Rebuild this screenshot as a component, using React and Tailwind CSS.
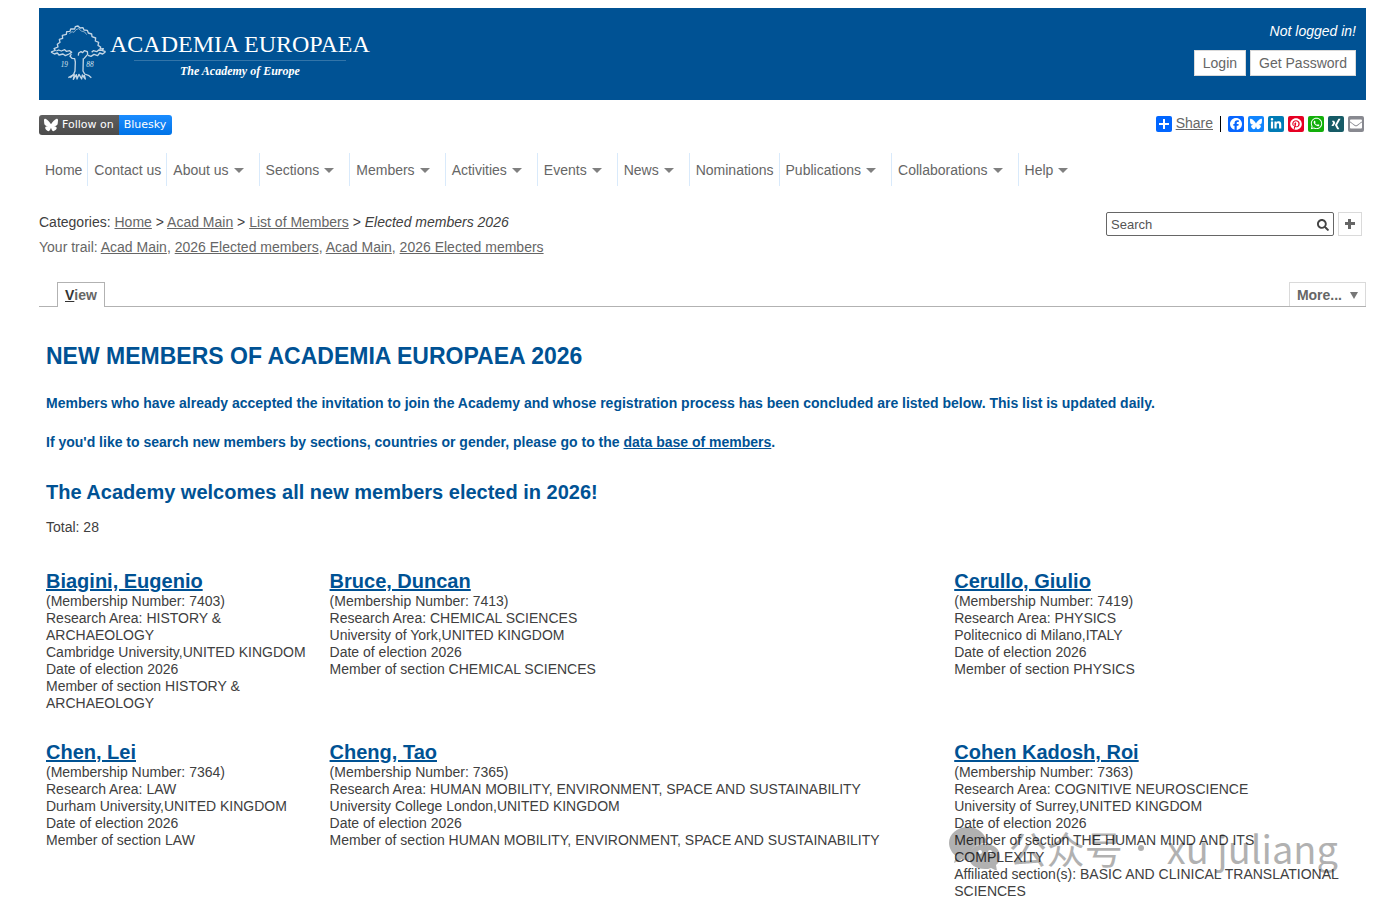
import { FaBluesky, FaFacebook, FaLinkedinIn, FaPinterest, FaWhatsapp, FaXing } from 'react-icons/fa6';
import { FaSearch, FaEnvelope } from 'react-icons/fa';

const navItems = [
  { label: 'Home' },
  { label: 'Contact us' },
  { label: 'About us', menu: true },
  { label: 'Sections', menu: true },
  { label: 'Members', menu: true },
  { label: 'Activities', menu: true },
  { label: 'Events', menu: true },
  { label: 'News', menu: true },
  { label: 'Nominations' },
  { label: 'Publications', menu: true },
  { label: 'Collaborations', menu: true },
  { label: 'Help', menu: true },
];

const shareLinks = [
  { name: 'Facebook', icon: FaFacebook, color: 'bg-[#0866ff]', size: 'size-3' },
  { name: 'Bluesky', icon: FaBluesky, color: 'bg-[#1185fe]', size: 'size-3' },
  { name: 'LinkedIn', icon: FaLinkedinIn, color: 'bg-[#007bb5]', size: 'size-3' },
  { name: 'Pinterest', icon: FaPinterest, color: 'bg-[#e60023]', size: 'size-3' },
  { name: 'WhatsApp', icon: FaWhatsapp, color: 'bg-[#12af0a]', size: 'size-[13px]' },
  { name: 'XING', icon: FaXing, color: 'bg-[#165b66]', size: 'size-3' },
];

const trail = ['Acad Main', '2026 Elected members', 'Acad Main', '2026 Elected members'];

const members = [
  {
    name: 'Biagini, Eugenio',
    number: 7403,
    area: 'HISTORY & ARCHAEOLOGY',
    place: 'Cambridge University,UNITED KINGDOM',
    section: 'HISTORY & ARCHAEOLOGY',
  },
  {
    name: 'Bruce, Duncan',
    number: 7413,
    area: 'CHEMICAL SCIENCES',
    place: 'University of York,UNITED KINGDOM',
    section: 'CHEMICAL SCIENCES',
  },
  {
    name: 'Cerullo, Giulio',
    number: 7419,
    area: 'PHYSICS',
    place: 'Politecnico di Milano,ITALY',
    section: 'PHYSICS',
  },
  {
    name: 'Chen, Lei',
    number: 7364,
    area: 'LAW',
    place: 'Durham University,UNITED KINGDOM',
    section: 'LAW',
  },
  {
    name: 'Cheng, Tao',
    number: 7365,
    area: 'HUMAN MOBILITY, ENVIRONMENT, SPACE AND SUSTAINABILITY',
    place: 'University College London,UNITED KINGDOM',
    section: 'HUMAN MOBILITY, ENVIRONMENT, SPACE AND SUSTAINABILITY',
  },
  {
    name: 'Cohen Kadosh, Roi',
    number: 7363,
    area: 'COGNITIVE NEUROSCIENCE',
    place: 'University of Surrey,UNITED KINGDOM',
    section: 'THE HUMAN MIND AND ITS COMPLEXITY',
    affiliated: 'BASIC AND CLINICAL TRANSLATIONAL SCIENCES',
  },
];

function TreeLogo() {
  return (
    <svg viewBox="0 0 168 168" className="size-14 shrink-0" fill="none" stroke="#c3d6e6" strokeWidth="4" strokeLinejoin="round" aria-hidden="true">
      {/* crown */}
      <path d="M3 81 L16 76 12 71 24 66 22 58 30 52 28 43 38 40 37 31 49 28 50 20 60 19 62 12 74 12 76 5 84 3 90 9 99 8 102 15 112 16 115 24 125 27 126 35 137 39 136 48 146 52 144 61 152 66 150 72 160 71 157 77 167 80" />
      <path d="M58 26 L66 20 72 22 78 14 86 11 94 18 104 21 110 29" strokeWidth="2" />
      {/* lower foliage */}
      <path d="M3 81 L13 87 22 84 27 90 39 87 46 92 57 87 65 82 59 77 49 79 44 74 34 78 26 75 19 78" />
      <path d="M166 81 L158 87 149 84 143 92 132 88 123 94 114 91 M156 76 L146 75 140 80 130 77 125 82" />
      <path d="M85 92 L86 84 93 80 98 83 103 77 112 80 113 88 107 95 102 101" />
      {/* trunk */}
      <path d="M64 87 L60 94 66 100 74 101 76 111 75 138 71 148 61 158" />
      <path d="M100 100 L99 138 104 147 117 152 124 158" />
      {/* roots */}
      <path d="M55 158 L66 152 73 149 70 163 79 149 81 162 87 148 95 162 97 150 106 162 103 150" />
      <text x="32" y="126" fontSize="22" fontStyle="italic" fontFamily="Liberation Serif, serif" fill="#d5e3ee" stroke="none">19</text>
      <text x="109" y="126" fontSize="22" fontStyle="italic" fontFamily="Liberation Serif, serif" fill="#d5e3ee" stroke="none">88</text>
    </svg>
  );
}

function Caret() {
  return (
    <svg viewBox="0 0 10 5" className="ml-[5px] h-[5px] w-[10px]" fill="#808080" aria-hidden="true">
      <path d="M0 0h10L5 5z" />
    </svg>
  );
}

function Header() {
  return (
    <header className="flex items-start justify-between bg-[#005294] pr-[10px] pb-[19px] pl-[11px]">
      <a href="#" className="mt-[17px] flex text-white">
        <TreeLogo />
        <span className="ml-1 flex flex-col items-center font-['Liberation_Serif',serif]">
          <span className="mt-1 text-[24px] leading-[31px]">ACADEMIA EUROPAEA</span>
          <span className="w-[212px] border-t border-[#3375a9]" />
          <span className="text-[12px] leading-[20px] font-bold italic">The Academy of Europe</span>
        </span>
      </a>
      <div className="mt-[14px] flex flex-col items-end gap-[10px]">
        <span className="leading-[18px] text-white italic">Not logged in!</span>
        <div className="flex gap-1">
          <button type="button" className="h-[26px] border border-[#dadada] bg-white px-2 text-[#666]">Login</button>
          <button type="button" className="h-[26px] border border-[#dadada] bg-white px-2 text-[#666]">Get Password</button>
        </div>
      </div>
    </header>
  );
}

function SocialBar() {
  return (
    <div className="mt-[15px] flex items-start justify-between">
      <a href="#" className="flex h-5 overflow-hidden rounded-[3px] font-['DejaVu_Sans',sans-serif] text-[11px] leading-5 text-white">
        <span className="flex items-center gap-1 bg-linear-to-b from-[#5f5f5f] to-[#4b4b4b] pr-[5px] pl-[5px]">
          <FaBluesky className="size-[14px]" />
          Follow on
        </span>
        <span className="bg-linear-to-b from-[#1a8cff] to-[#0073e6] pr-[6px] pl-[5px]">Bluesky</span>
      </a>
      <div className="flex items-center gap-1 pr-[2px]">
        <a href="#" className="flex items-center gap-1 text-[#666] underline">
          <span className="flex size-4 items-center justify-center rounded-[2px] bg-[#0166ff] text-white">
            <svg viewBox="0 0 10 10" className="size-[10px]" fill="currentColor" aria-hidden="true">
              <path d="M4 0h2v4h4v2H6v4H4V6H0V4h4z" />
            </svg>
          </span>
          Share
        </a>
        <span className="mx-[3px] h-4 w-px bg-black" />
        {shareLinks.map(({ name, icon: Icon, color, size }) => (
          <a key={name} href="#" aria-label={name} className={`flex size-4 items-center justify-center rounded-[2px] text-white ${color}`}>
            <Icon className={size} />
          </a>
        ))}
        <a href="#" aria-label="Email" className="flex size-4 items-center justify-center rounded-[2px] bg-[#888990] text-white">
          <FaEnvelope className="size-3" />
        </a>
      </div>
    </div>
  );
}

function NavBar() {
  return (
    <nav className="mt-[18px] flex flex-wrap">
      {navItems.map((item) => (
        <a
          key={item.label}
          href="#"
          className={`flex h-[33px] items-center border-r border-[#d9eafb] pt-[2px] pl-[6px] text-[#666] last:border-r-0 ${item.menu ? 'pr-[15px]' : 'pr-[5px]'}`}
        >
          {item.label}
          {item.menu && <Caret />}
        </a>
      ))}
    </nav>
  );
}

function Breadcrumbs() {
  return (
    <div className="mt-[24px] flex items-start justify-between">
      <div className="leading-[25px]">
        <p>
          Categories: <a href="#" className="text-[#666] underline">Home</a> &gt;{' '}
          <a href="#" className="text-[#666] underline">Acad Main</a> &gt;{' '}
          <a href="#" className="text-[#666] underline">List of Members</a> &gt; <em>Elected members 2026</em>
        </p>
        <p className="text-[#666]">
          Your trail:{' '}
          {trail.map((page, i) => (
            <span key={i}>
              {i > 0 && ', '}
              <a href="#" className="underline">{page}</a>
            </span>
          ))}
        </p>
      </div>
      <form className="mt-[2px] mr-1 flex gap-1">
        <div className="flex h-6 w-[228px] items-center rounded-[2px] border border-[#666] px-1">
          <input type="text" aria-label="Search" defaultValue="Search" className="min-w-0 flex-1 text-[13px] text-[#555] outline-none" />
          <button type="submit" aria-label="Go" className="pt-[2px]">
            <FaSearch className="size-3 text-[#444]" />
          </button>
        </div>
        <button type="button" aria-label="Advanced search" className="flex size-6 items-center justify-center border border-[#dadada]">
          <svg viewBox="0 0 10 10" className="size-[10px]" fill="#666" aria-hidden="true">
            <path d="M3 0h3v3h4v3H6v4H3V6H0V3h3z" />
          </svg>
        </button>
      </form>
    </div>
  );
}

function Tabs() {
  return (
    <div className="mt-[22px] flex justify-between border-b border-[#b2b2b2] pl-[18px] font-bold text-[#666]">
      <a href="#" className="-mb-px flex h-[25px] items-center border border-b-0 border-[#b2b2b2] bg-white px-[7px]">
        <span className="text-[#333] underline">V</span>iew
      </a>
      <button type="button" className="flex h-6 items-center gap-2 border border-b-0 border-[#dadada] px-[7px] pt-px">
        More...
        <svg viewBox="0 0 8 7" className="h-[7px] w-2" fill="#777" aria-hidden="true">
          <path d="M0 0h8L4 7z" />
        </svg>
      </button>
    </div>
  );
}

function Member({ member }) {
  return (
    <li className="pr-6">
      <h3 className="text-[20px] leading-[23px] font-bold">
        <a href="#" className="text-[#005294] underline">{member.name}</a>
      </h3>
      <p>{`(Membership Number: ${member.number})`}</p>
      <p>{`Research Area: ${member.area}`}</p>
      <p className="whitespace-nowrap">{member.place}</p>
      <p>Date of election 2026</p>
      <p>{`Member of section ${member.section}`}</p>
      {member.affiliated && <p>{`Affiliated section(s): ${member.affiliated}`}</p>}
    </li>
  );
}

function Watermark() {
  return (
    <div className="pointer-events-none absolute right-[43px] bottom-[24px] flex items-center font-['Noto_Sans_CJK_SC',sans-serif] text-[38px] leading-[56px] text-black opacity-30">
      <svg viewBox="0 0 52 44" className="mr-[8px] h-[44px] w-[52px]" fill="currentColor" fillRule="evenodd" aria-hidden="true">
        <path d="M19 1C8 1 0 8 0 17c0 5 3 10 7 13l-2 7 8-4c2 1 4 1 7 1-1-10 7-17 18-17C37 8 29 1 19 1z" />
        <path d="M36 18c-9 0-16 5-16 13s7 12 16 12c2 0 4 0 6-1l6 3-1-6c3-2 4-5 4-8 0-8-6-13-15-13zM31 24a2 2 0 1 1 0 4 2 2 0 1 1 0-4zM41 24a2 2 0 1 1 0 4 2 2 0 1 1 0-4z" />
      </svg>
      <span>公众号</span>
      <span className="mr-[23px] ml-[15px] size-[6px] rounded-full bg-current" />
      <span>xu juliang</span>
    </div>
  );
}

export default function App() {
  return (
    <div className="relative bg-white pt-2 pr-[15px] pl-[39px] font-['Liberation_Sans',Arial,sans-serif] text-[14px] leading-[17px] text-[#404040]">
      <Header />
      <SocialBar />
      <NavBar />
      <Breadcrumbs />
      <Tabs />

      <main className="pl-[7px]">
        <div className="font-bold text-[#005294]">
          <h1 className="mt-[35px] text-[23px] leading-[28px]">NEW MEMBERS OF ACADEMIA EUROPAEA 2026</h1>
          <p className="mt-[25px]">
            Members who have already accepted the invitation to join the Academy and whose registration process has been
            concluded are listed below. This list is updated daily.
          </p>
          <p className="mt-[22px]">
            If you'd like to search new members by sections, countries or gender, please go to the{' '}
            <a href="#" className="underline">data base of members</a>.
          </p>
          <h2 className="mt-[29px] text-[20px] leading-[24px]">The Academy welcomes all new members elected in 2026!</h2>
        </div>
        <p className="mt-[15px]">Total: 28</p>

        <ul className="mt-[34px] grid grid-cols-[283fr_625fr_412fr] gap-y-[29px]">
          {members.map((member) => (
            <Member key={member.number} member={member} />
          ))}
        </ul>
      </main>

      {/* Channel watermark */}
      <Watermark />
    </div>
  );
}
